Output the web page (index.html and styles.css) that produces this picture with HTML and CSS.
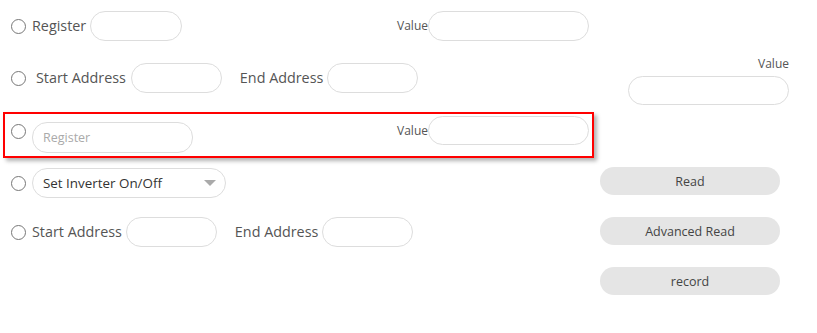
FILE: index.html
```html
<!DOCTYPE html>
<html>
<head>
<meta charset="utf-8">
<link rel="stylesheet" href="styles.css">
</head>
<body>
<div class="page">
  <div class="left">
    <div class="row row1">
      <span class="radio"></span>
      <span class="label ml6">Register</span>
      <span class="input w92 ml4"></span>
      <div class="value-group">
        <span class="small">Value</span>
        <span class="input w161"></span>
      </div>
    </div>
    <div class="row row2">
      <span class="radio"></span>
      <span class="label ml10">Start Address</span>
      <span class="input w91 ml5"></span>
      <span class="label ml18">End Address</span>
      <span class="input w91 ml4"></span>
    </div>
    <div class="row row3 selected">
      <span class="radio r3"></span>
      <span class="input w161 ml6 reg3"><span class="placeholder">Register</span></span>
      <div class="value-group vg3">
        <span class="small">Value</span>
        <span class="input w161 h29"></span>
      </div>
    </div>
    <div class="row row4">
      <span class="radio"></span>
      <span class="select ml6"><span class="select-text">Set Inverter On/Off</span><span class="caret"></span></span>
    </div>
    <div class="row row5">
      <span class="radio"></span>
      <span class="label ml6">Start Address</span>
      <span class="input w91 ml4"></span>
      <span class="label ml18">End Address</span>
      <span class="input w91 ml4"></span>
    </div>
  </div>
  <div class="right">
    <div class="rvalue">
      <div class="small rlabel">Value</div>
      <span class="input w161 rinput"></span>
    </div>
    <div class="buttons">
      <button class="btn">Read</button>
      <button class="btn">Advanced Read</button>
      <button class="btn">record</button>
    </div>
  </div>
</div>
</body>
</html>
```
FILE: styles.css
```css
* { box-sizing: border-box; }
html, body { margin: 0; padding: 0; background: #fff; }
body {
  font-family: "Open Sans", "Noto Sans", sans-serif;
  color: #555;
  width: 817px;
  height: 333px;
  overflow: hidden;
}
.page { display: flex; align-items: flex-start; }
.left { width: 594px; display: flex; flex-direction: column; }
.row {
  display: flex;
  align-items: center;
  height: 30px;
  padding-left: 11px;
  padding-right: 5px;
}
.row1 { margin-top: 11px; }
.row2 { margin-top: 22px; }
.row3 { margin-top: 19px; }
.row4 { margin-top: 10px; }
.row5 { margin-top: 19px; }
.selected {
  margin-left: 3px;
  height: 46px;
  border: 2px solid #f00;
  padding-left: 6px;
  padding-right: 3px;
  align-items: flex-start;
  box-shadow: 3px 3px 4px rgba(0,0,0,0.3);
}
.radio {
  width: 15px; height: 15px;
  border: 1px solid #777;
  border-radius: 50%;
  background: #fff;
  flex: none;
}
.r3 { margin-top: 10px; }
.label { font-size: 14.35px; line-height: 18px; white-space: nowrap; }
.small { font-size: 12px; line-height: 16px; }
.input {
  display: inline-block;
  height: 30px;
  border: 1px solid #ddd;
  border-radius: 15px;
  background: #fff;
  flex: none;
}
.h29 { height: 29px; }
.w91 { width: 91px; }
.w92 { width: 92px; }
.w161 { width: 161px; }
.ml4 { margin-left: 4px; }
.ml5 { margin-left: 5px; }
.ml6 { margin-left: 6px; }
.ml10 { margin-left: 10px; }
.ml18 { margin-left: 18px; }
.value-group { margin-left: auto; display: flex; align-items: center; }
.vg3 { margin-top: 2px; }
.reg3 { margin-top: 8px; height: 31px; display: flex; align-items: center; padding-left: 10px; }
.placeholder { font-size: 12.5px; color: #aaa; }
.select {
  width: 194px; height: 30px;
  border: 1px solid #ddd;
  border-radius: 15px;
  display: flex; align-items: center;
  padding-left: 10px;
  position: relative;
}
.select-text { font-size: 13.4px; color: #333; }
.caret {
  position: absolute;
  left: 171px; top: 11px;
  width: 0; height: 0;
  border-left: 6px solid transparent;
  border-right: 6px solid transparent;
  border-top: 6px solid #aaa;
}
.right { width: 190px; margin-left: 6px; display: flex; flex-direction: column; }
.rvalue { margin-left: 28px; margin-top: 57px; display: flex; flex-direction: column; align-items: flex-end; width: 161px; }
.rlabel { line-height: 14px; }
.rinput { margin-top: 5px; height: 29px; }
.buttons { display: flex; flex-direction: column; gap: 22px; margin-top: 62px; }
.btn {
  width: 180px; height: 28px;
  border: none;
  border-radius: 14px;
  background: #e5e5e5;
  font-family: "Open Sans", "Noto Sans", sans-serif;
  font-size: 12.5px;
  color: #444;
  padding: 0;
}
```
